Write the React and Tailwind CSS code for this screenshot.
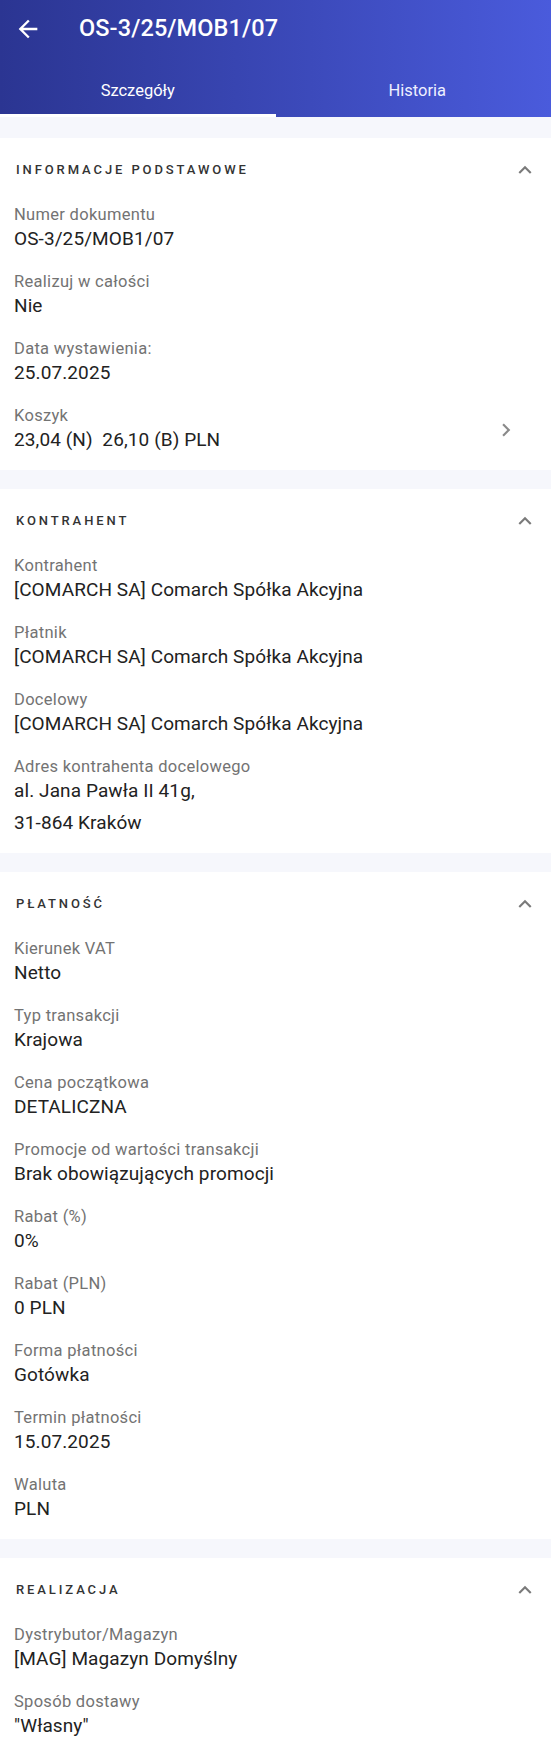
import React from "react";

const sections = [
  {
    title: "INFORMACJE PODSTAWOWE",
    items: [
      { label: "Numer dokumentu", value: "OS-3/25/MOB1/07" },
      { label: "Realizuj w całości", value: "Nie" },
      { label: "Data wystawienia:", value: "25.07.2025" },
      { label: "Koszyk", value: "23,04 (N)  26,10 (B) PLN", link: true },
    ],
  },
  {
    title: "KONTRAHENT",
    items: [
      { label: "Kontrahent", value: "[COMARCH SA] Comarch Spółka Akcyjna" },
      { label: "Płatnik", value: "[COMARCH SA] Comarch Spółka Akcyjna" },
      { label: "Docelowy", value: "[COMARCH SA] Comarch Spółka Akcyjna" },
      {
        label: "Adres kontrahenta docelowego",
        value: "al. Jana Pawła II 41g,",
        extra: "31-864 Kraków",
      },
    ],
  },
  {
    title: "PŁATNOŚĆ",
    items: [
      { label: "Kierunek VAT", value: "Netto" },
      { label: "Typ transakcji", value: "Krajowa" },
      { label: "Cena początkowa", value: "DETALICZNA" },
      { label: "Promocje od wartości transakcji", value: "Brak obowiązujących promocji" },
      { label: "Rabat (%)", value: "0%" },
      { label: "Rabat (PLN)", value: "0 PLN" },
      { label: "Forma płatności", value: "Gotówka" },
      { label: "Termin płatności", value: "15.07.2025" },
      { label: "Waluta", value: "PLN" },
    ],
  },
  {
    title: "REALIZACJA",
    items: [
      { label: "Dystrybutor/Magazyn", value: "[MAG] Magazyn Domyślny" },
      { label: "Sposób dostawy", value: "\"Własny\"" },
    ],
  },
];

const BackIcon = () => (
  <svg viewBox="0 0 24 24" className="w-[28px] h-[28px]" fill="#ffffff">
    <path d="M20 11H7.83l5.59-5.59L12 4l-8 8 8 8 1.41-1.41L7.83 13H20v-2z" />
  </svg>
);

const ExpandLess = () => (
  <svg viewBox="0 0 24 24" className="w-[26px] h-[26px]" fill="#7a7a7a">
    <path d="M7.41 15.41L12 10.83l4.59 4.58L18 14l-6-6-6 6z" />
  </svg>
);

const ChevronRight = () => (
  <svg viewBox="0 0 24 24" className="w-[26px] h-[26px]" fill="#8a8a8a">
    <path d="M10 6L8.59 7.41 13.17 12l-4.58 4.59L10 18l6-6z" />
  </svg>
);

const Field = ({ item }) => (
  <div className="flex items-center">
    <div className="flex-1 min-w-0">
      <div className="text-[16.5px] leading-[21px] tracking-[0.3px] text-[#737373]">
        {item.label}
      </div>
      <div className="text-[19px] leading-[28px] tracking-[0.1px] text-[#222222] whitespace-pre">
        {item.value}
      </div>
      {item.extra && (
        <div className="mt-[4px] text-[19px] leading-[28px] tracking-[0.1px] text-[#222222]">
          {item.extra}
        </div>
      )}
    </div>
    {item.link && (
      <div className="mr-[18px]">
        <ChevronRight />
      </div>
    )}
  </div>
);

const Section = ({ section }) => (
  <div className="bg-white pt-[20px] pb-[16px]">
    <div className="flex items-center justify-between h-[24px] pl-[16px] pr-[13px]">
      <span className="text-[13px] font-medium tracking-[2.9px] text-[#333333]">
        {section.title}
      </span>
      <ExpandLess />
    </div>
    <div className="mt-[22px] px-[14px] flex flex-col gap-[18px]">
      {section.items.map((item) => (
        <Field key={item.label} item={item} />
      ))}
    </div>
  </div>
);

const App = () => {
  return (
    <div
      className="w-full min-h-screen bg-[#f6f7fc]"
      style={{ fontFamily: "Roboto, 'Liberation Sans', sans-serif" }}
    >
      <div className="bg-gradient-to-r from-[#2b3592] to-[#4a5bdc] text-white">
        <div className="h-[57px] flex items-center pl-[14px] pt-[1px]">
          <BackIcon />
          <span className="ml-[37px] text-[23.5px] font-medium tracking-[0.1px]">
            OS-3/25/MOB1/07
          </span>
        </div>
        <div className="grid grid-cols-2 h-[60px]">
          <div className="flex justify-center pt-[11px] border-b-[3px] border-white">
            <span className="text-[16.5px] leading-[46px]">Szczegóły</span>
          </div>
          <div className="flex justify-center pt-[11px] pl-[8px] border-b-[3px] border-transparent">
            <span className="text-[16.5px] leading-[46px] text-[#eef0ff]">Historia</span>
          </div>
        </div>
      </div>
      <div className="flex flex-col gap-[19px] pt-[21px]">
        {sections.map((s) => (
          <Section key={s.title} section={s} />
        ))}
      </div>
    </div>
  );
};

export default App;
